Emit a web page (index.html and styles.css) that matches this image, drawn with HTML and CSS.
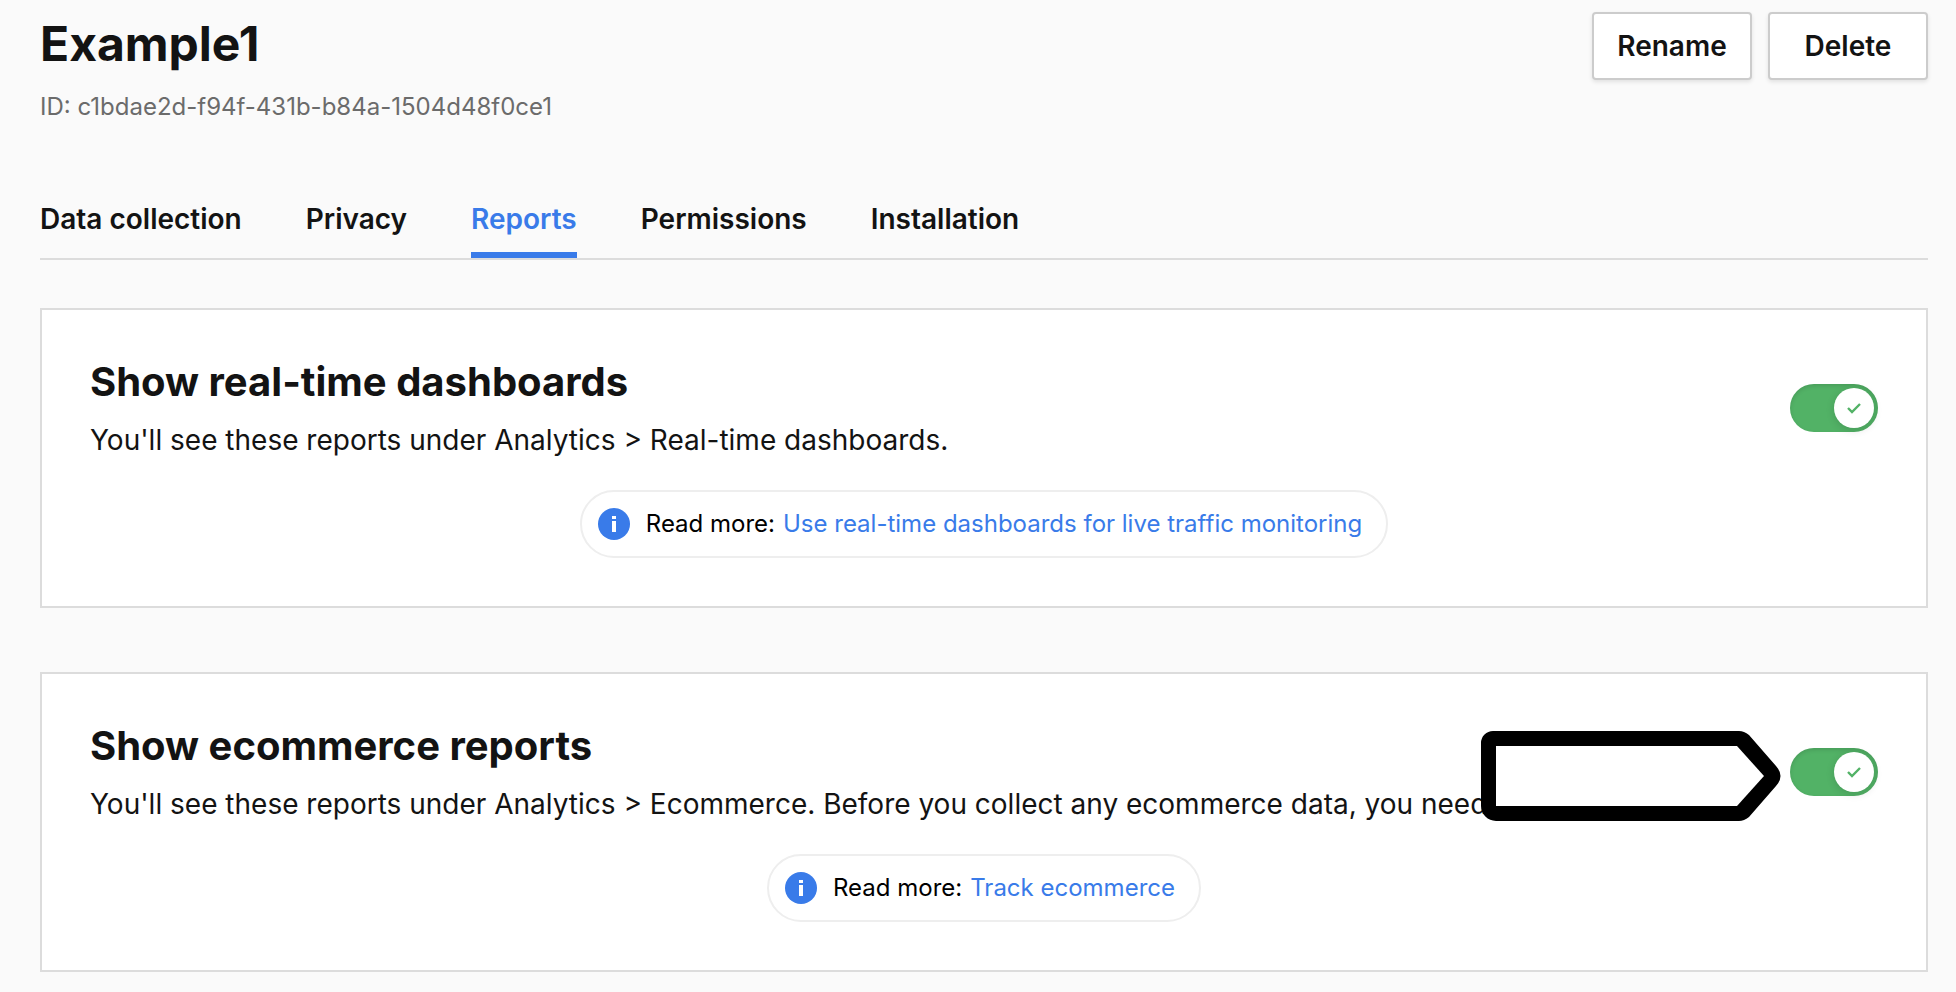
FILE: index.html
```html
<!DOCTYPE html>
<html lang="en">
<head>
    <meta charset="UTF-8">
    <meta name="viewport" content="width=device-width, initial-scale=1.0">
    <title>Example1</title>
    <link rel="stylesheet" href="styles.css">
</head>
<body>
    <header class="page-header">
        <div>
            <h1>Example1</h1>
            <p class="site-id">ID: c1bdae2d-f94f-431b-b84a-1504d48f0ce1</p>
        </div>
        <div class="actions">
            <button type="button" class="btn">Rename</button>
            <button type="button" class="btn">Delete</button>
        </div>
    </header>
    <nav class="tabs">
        <a href="#" class="tab">Data collection</a>
        <a href="#" class="tab">Privacy</a>
        <a href="#" class="tab active">Reports</a>
        <a href="#" class="tab">Permissions</a>
        <a href="#" class="tab">Installation</a>
    </nav>
    <main>
        <section class="card">
            <div class="card-header">
                <div>
                    <h2><label for="realtime">Show real-time dashboards</label></h2>
                    <p>You'll see these reports under Analytics &gt; Real-time dashboards.</p>
                </div>
                <div class="switch">
                    <input type="checkbox" id="realtime" checked>
                    <span class="knob">
                        <svg width="14" height="11" viewBox="0 0 14 11"><path d="M1 5l4 4 8-8" fill="none" stroke="#52b266" stroke-width="2.4"/></svg>
                    </span>
                </div>
            </div>
            <div class="read-more">
                <svg class="info" viewBox="0 0 32 32"><circle cx="16" cy="16" r="16" fill="#397be9"/><path d="M14 8h4v3h-4zM14 13h4v11h-4z" fill="#fff"/></svg>
                <span>Read more:</span>
                <a href="#">Use real-time dashboards for live traffic monitoring</a>
            </div>
        </section>

        <section class="card">
            <div class="card-header">
                <div>
                    <h2><label for="ecommerce">Show ecommerce reports</label></h2>
                    <p>You'll see these reports under Analytics &gt; Ecommerce. Before you collect any ecommerce data, you need</p>
                </div>
                <div class="switch">
                    <input type="checkbox" id="ecommerce" checked>
                    <span class="knob">
                        <svg width="14" height="11" viewBox="0 0 14 11"><path d="M1 5l4 4 8-8" fill="none" stroke="#52b266" stroke-width="2.4"/></svg>
                    </span>
                </div>
            </div>
            <div class="read-more">
                <svg class="info" viewBox="0 0 32 32"><circle cx="16" cy="16" r="16" fill="#397be9"/><path d="M14 8h4v3h-4zM14 13h4v11h-4z" fill="#fff"/></svg>
                <span>Read more:</span>
                <a href="#">Track ecommerce</a>
            </div>
            <!-- pointer to the ecommerce switch -->
            <svg class="pointer" width="300" height="90" viewBox="0 0 300 90">
                <path d="M12 0H258Q263 0 268 4L295 35Q304 45 295 55L268 86Q263 90 258 90H15A15 15 0 0 1 0 75V12A12 12 0 0 1 12 0z"/>
                <path d="M15 15H256L283 45 256 75H15z" fill="#fff"/>
            </svg>
        </section>
    </main>
</body>
</html>
```
FILE: styles.css
```css
* {
    box-sizing: border-box;
}
body {
    font-family: Inter, "Liberation Sans", sans-serif;
    font-size: 28px;
    line-height: 36px;
    color: #131313;
    background-color: #fafafa;
    margin: 0;
    padding: 12px 28px 20px 40px;
}
h1, h2, p {
    margin: 0;
}
a {
    color: #397be9;
    text-decoration: none;
}
.page-header {
    display: flex;
    justify-content: space-between;
    align-items: flex-start;
}
h1 {
    font-size: 48px;
    line-height: 64px;
    font-weight: 700;
}
.site-id {
    margin-top: 13px;
    font-size: 24px;
    color: #6b6b6b;
}
.actions {
    display: flex;
    gap: 16px;
}
.btn {
    min-width: 160px;
    height: 68px;
    padding: 0 20px;
    font: inherit;
    font-weight: 600;
    color: #131313;
    background: #fff;
    border: 2px solid #ccc;
    border-radius: 4px;
    box-shadow: 0 2px 4px rgba(0, 0, 0, 0.1);
    cursor: pointer;
}
.tabs {
    display: flex;
    gap: 64px;
    margin-top: 76px;
    border-bottom: 2px solid #dcdcdc;
}
.tab {
    padding-bottom: 15px;
    border-bottom: 6px solid transparent;
    font-weight: 600;
    color: #131313;
}
.tab.active {
    color: #397be9;
    border-bottom-color: #397be9;
}
main {
    display: flex;
    flex-direction: column;
    gap: 64px;
    margin-top: 48px;
}
.card {
    position: relative;
    display: flex;
    flex-direction: column;
    align-items: center;
    gap: 32px;
    padding: 48px;
    background: #fff;
    border: 2px solid #dcdcdc;
}
.card-header {
    display: flex;
    justify-content: space-between;
    align-items: center;
    width: 100%;
}
h2 {
    margin-bottom: 16px;
    font-size: 40px;
    line-height: 48px;
    font-weight: 700;
}
.switch {
    position: relative;
    flex: none;
    width: 88px;
    height: 48px;
}
.switch input {
    appearance: none;
    display: block;
    width: 100%;
    height: 100%;
    margin: 0;
    border-radius: 24px;
    background: #52b266;
    box-shadow: inset 0 2px 4px rgba(0, 0, 0, 0.12);
    cursor: pointer;
}
.knob {
    position: absolute;
    top: 4px;
    left: 4px;
    display: flex;
    align-items: center;
    justify-content: center;
    width: 40px;
    height: 40px;
    border-radius: 50%;
    background: #fff;
    box-shadow: 0 2px 8px rgba(0, 0, 0, 0.14);
    pointer-events: none;
}
.switch input:checked + .knob {
    left: 44px;
}
.read-more {
    display: flex;
    align-items: center;
    gap: 8px;
    padding: 14px 24px 14px 16px;
    border: 2px solid #eee;
    border-radius: 34px;
    font-size: 24px;
    color: #000;
}
.info {
    width: 32px;
    height: 32px;
    margin-right: 8px;
}
.pointer {
    position: absolute;
    top: 57px;
    right: 145px;
}
```
